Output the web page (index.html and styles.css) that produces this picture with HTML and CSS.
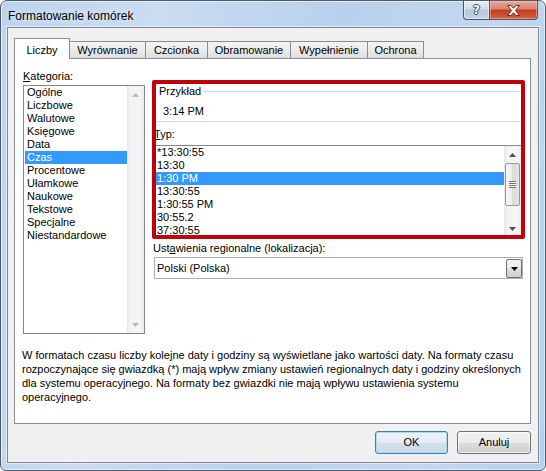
FILE: index.html
```html
<!DOCTYPE html>
<html lang="pl">
<head>
<meta charset="utf-8">
<title>Formatowanie komórek</title>
<link rel="stylesheet" href="styles.css">
</head>
<body>
<div class="window">
  <div class="titlebar">
    <span class="title">Formatowanie komórek</span>
    <div class="caption">
      <div class="cbtn help"><span>?</span></div>
      <div class="cbtn close">
        <svg width="13" height="11" viewBox="0 0 13 11"><path d="M0.5 0.5H4L6.5 3.3L9 0.5H12.5L8.4 5.5L12.5 10.5H9L6.5 7.7L4 10.5H0.5L4.6 5.5Z" fill="#fff" stroke="#5a2418" stroke-width="0.9" stroke-linejoin="round"/></svg>
      </div>
    </div>
  </div>
  <div class="client">
    <div class="tabs">
      <div class="tab sel w-liczby">Liczby</div>
      <div class="tab w-wyr">Wyrównanie</div>
      <div class="tab w-czc">Czcionka</div>
      <div class="tab w-obr">Obramowanie</div>
      <div class="tab w-wyp">Wypełnienie</div>
      <div class="tab w-och">Ochrona</div>
    </div>
    <div class="panel">
      <div class="cols">
        <div class="left">
          <div class="label"><u>K</u>ategoria:</div>
          <div class="listbox cat">
            <div class="items">
              <div class="item">Ogólne</div>
              <div class="item">Liczbowe</div>
              <div class="item">Walutowe</div>
              <div class="item">Księgowe</div>
              <div class="item">Data</div>
              <div class="item on">Czas</div>
              <div class="item">Procentowe</div>
              <div class="item">Ułamkowe</div>
              <div class="item">Naukowe</div>
              <div class="item">Tekstowe</div>
              <div class="item">Specjalne</div>
              <div class="item">Niestandardowe</div>
            </div>
            <div class="sb disabled">
              <div class="sb-btn"><svg width="7" height="4" viewBox="0 0 7 4"><path d="M0 4L3.5 0L7 4Z"/></svg></div>
              <div class="sb-track"></div>
              <div class="sb-btn"><svg width="7" height="4" viewBox="0 0 7 4"><path d="M0 0L7 0L3.5 4Z"/></svg></div>
            </div>
          </div>
        </div>
        <div class="right">
          <fieldset class="group">
            <legend>Przykład</legend>
            <div class="sample">3:14 PM</div>
          </fieldset>
          <div class="label typ"><u>T</u>yp:</div>
          <div class="listbox types">
            <div class="items">
              <div class="item">*13:30:55</div>
              <div class="item">13:30</div>
              <div class="item on">1:30 PM</div>
              <div class="item">13:30:55</div>
              <div class="item">1:30:55 PM</div>
              <div class="item">30:55.2</div>
              <div class="item">37:30:55</div>
            </div>
            <div class="sb">
              <div class="sb-btn"><svg width="7" height="4" viewBox="0 0 7 4"><path d="M0 4L3.5 0L7 4Z"/></svg></div>
              <div class="sb-track"><div class="thumb"><div class="grip"></div></div></div>
              <div class="sb-btn"><svg width="7" height="4" viewBox="0 0 7 4"><path d="M0 0L7 0L3.5 4Z"/></svg></div>
            </div>
          </div>
          <div class="label loc">Ust<u>a</u>wienia regionalne (lokalizacja):</div>
          <div class="combo">
            <span class="combo-text">Polski (Polska)</span>
            <div class="dd"><svg width="7" height="4" viewBox="0 0 7 4"><path d="M0 0L7 0L3.5 4Z"/></svg></div>
          </div>
          <div class="mark"></div>
        </div>
      </div>
      <p class="desc">W formatach czasu liczby kolejne daty i godziny są wyświetlane jako wartości daty. Na formaty czasu<br>rozpoczynające się gwiazdką (*) mają wpływ zmiany ustawień regionalnych daty i godziny określonych<br>dla systemu operacyjnego. Na formaty bez gwiazdki nie mają wpływu ustawienia systemu<br>operacyjnego.</p>
    </div>
    <div class="buttons">
      <div class="btn ok">OK</div>
      <div class="btn cancel">Anuluj</div>
    </div>
  </div>
</div>
</body>
</html>
```

FILE: styles.css
```css
body {
  margin: 0;
  background: #ffffff;
  font-family: "Liberation Sans", Arial, sans-serif;
  font-size: 11px;
  color: #000;
}

.window {
  box-sizing: border-box;
  width: 546px;
  height: 471px;
  border: 1px solid #4f5b6a;
  border-radius: 7px 7px 6px 6px;
  padding: 0 6px 7px 6px;
  display: flex;
  flex-direction: column;
  background: linear-gradient(100deg, #bcd4ee 0%, #c9dcf1 25%, #b9d1ec 55%, #c3d8ef 80%, #b6cfeb 100%);
  box-shadow: inset 0 0 0 1px rgba(255, 255, 255, 0.55);
}

.titlebar {
  height: 26px;
  display: flex;
  align-items: flex-start;
}

.title {
  margin: 8px 0 0 1px;
  font-size: 12px;
  line-height: 14px;
  color: #000;
  text-shadow: 0 0 6px rgba(255, 255, 255, 0.9);
}

.caption {
  display: flex;
  margin-left: auto;
  margin-right: 1px;
}

.cbtn {
  box-sizing: border-box;
  height: 19px;
  border: 1px solid #46546a;
  border-top: none;
  display: flex;
  align-items: center;
  justify-content: center;
}

.help {
  width: 27px;
  border-radius: 0 0 0 4px;
  background: linear-gradient(#e6edf6, #d3deeb 45%, #b4c6db 50%, #c3d4e7 100%);
  box-shadow: inset 0 0 0 1px rgba(255, 255, 255, 0.5);
}

.help span {
  font-family: "DejaVu Sans", sans-serif;
  font-weight: bold;
  font-size: 12px;
  line-height: 14px;
  color: #fff;
  text-shadow: 1px 0 #3b4c63, -1px 0 #3b4c63, 0 1px #3b4c63, 0 -1px #3b4c63;
}

.close {
  width: 49px;
  margin-left: -1px;
  border-radius: 0 0 4px 0;
  background: linear-gradient(#e9a99a, #d9826e 45%, #c3391d 50%, #d4623f 100%);
  box-shadow: inset 0 0 0 1px rgba(255, 220, 210, 0.45);
}

.close svg {
  display: block;
}

.client {
  box-sizing: border-box;
  width: 532px;
  height: 436px;
  border: 1px solid #7c8898;
  background: #f0f0f0;
  padding: 10px 7px 0 6px;
  box-shadow: 0 0 0 1px rgba(255, 255, 255, 0.55);
}

.tabs {
  display: flex;
  align-items: flex-end;
  height: 20px;
}

.tab {
  box-sizing: border-box;
  height: 17px;
  border: 1px solid #898c95;
  border-bottom: none;
  margin-left: -1px;
  padding-top: 1px;
  text-align: center;
  line-height: 15px;
  white-space: nowrap;
  background: linear-gradient(#f4f4f4, #ebebeb 50%, #dedede);
  position: relative;
  z-index: 1;
}

.tab.sel {
  height: 21px;
  margin-left: 0;
  margin-bottom: -1px;
  padding-top: 4px;
  background: #fff;
  z-index: 3;
}

.w-liczby { width: 56px; }
.w-wyr { width: 77px; }
.w-czc { width: 63px; }
.w-obr { width: 84px; }
.w-wyp { width: 78px; }
.w-och { width: 57px; }

.panel {
  box-sizing: border-box;
  height: 366px;
  border: 1px solid #898c95;
  background: #fff;
  padding: 11px 7px 0 8px;
}

.cols {
  display: flex;
  gap: 8px;
}

.left {
  width: 122px;
}

.label {
  height: 13px;
  line-height: 13px;
  white-space: nowrap;
}

.listbox {
  box-sizing: border-box;
  display: flex;
  border: 1px solid #828790;
  background: #fff;
  overflow: hidden;
}

.items {
  flex: 1;
  overflow: hidden;
}

.item {
  height: 13px;
  line-height: 13px;
  white-space: nowrap;
}

.item.on {
  background: #3399ff;
  color: #fff;
}

.cat {
  margin-top: 2px;
  height: 249px;
}

.cat .items {
  padding-left: 1px;
}

.cat .item {
  padding-left: 2px;
}

.types .item {
  padding-left: 1px;
}

.sb {
  width: 17px;
  flex: none;
  display: flex;
  flex-direction: column;
  background: linear-gradient(to right, #e6e6e6, #f3f3f3 3px, #f5f5f5 13px, #ececec);
}

.sb-btn {
  height: 17px;
  flex: none;
  display: flex;
  align-items: center;
  justify-content: center;
}

.sb-btn svg {
  display: block;
  fill: #4f4f4f;
}

.sb.disabled .sb-btn svg {
  fill: #b9b9b9;
}

.sb-track {
  flex: 1;
}

.thumb {
  box-sizing: border-box;
  height: 43px;
  margin: 0 1px;
  border: 1px solid #979797;
  border-radius: 2px;
  background: linear-gradient(to right, #f6f6f6, #ececec 50%, #dcdcdc 50%, #e3e3e3);
  display: flex;
  align-items: center;
  justify-content: center;
}

.grip {
  width: 7px;
  height: 7px;
  background: repeating-linear-gradient(to bottom, #717171 0 1px, #f8f8f8 1px 2px);
}

.right {
  width: 370px;
  margin-top: 15px;
  position: relative;
}

.group {
  margin: 0;
  min-width: 0;
  padding: 7px 0 3px 9px;
  border: 1px solid #d5dfe5;
  border-radius: 3px;
}

.group legend {
  padding: 0 2px;
  margin-left: -6px;
  line-height: 13px;
}

.sample {
  line-height: 13px;
}

.typ {
  margin: 6px 0 4px 1px;
}

.types {
  margin-left: 2px;
  width: 367px;
  height: 93px;
}

.loc {
  margin-top: 4px;
}

.combo {
  box-sizing: border-box;
  margin: 2px 0 0 1px;
  width: 369px;
  height: 22px;
  border: 1px solid #abadb3;
  background: #fff;
  display: flex;
  align-items: flex-start;
}

.combo-text {
  padding: 4px 0 0 2px;
  line-height: 13px;
}

.dd {
  box-sizing: border-box;
  margin: 1px 0 0 auto;
  width: 16px;
  height: 19px;
  border: 1px solid #707070;
  border-radius: 2px;
  background: linear-gradient(#f2f2f2, #ebebeb 50%, #dddddd 50%, #cfcfcf);
  display: flex;
  align-items: center;
  justify-content: center;
}

.dd svg {
  display: block;
  fill: #000;
}

.mark {
  position: absolute;
  left: -1px;
  top: -5px;
  box-sizing: border-box;
  width: 373px;
  height: 159px;
  border: 4px solid #c0000b;
  border-radius: 2px;
  pointer-events: none;
}

.desc {
  margin: 14px 0 0 -1px;
  line-height: 14px;
  white-space: nowrap;
}

.buttons {
  display: flex;
  justify-content: flex-end;
  gap: 9px;
  margin-top: 7px;
}

.btn {
  box-sizing: border-box;
  height: 23px;
  border: 1px solid #707070;
  border-radius: 3px;
  text-align: center;
  line-height: 21px;
  background: linear-gradient(#f2f2f2, #ebebeb 50%, #dddddd 51%, #cfcfcf);
  box-shadow: inset 0 0 0 1px rgba(255, 255, 255, 0.7);
}

.ok {
  width: 73px;
  border-color: #3c7fb1;
  background: linear-gradient(#eef4f9, #e4ecf3 50%, #d6e1eb 51%, #cad7e3);
  box-shadow: inset 0 0 0 1px #a9dcf3;
}

.cancel {
  width: 74px;
}
```
